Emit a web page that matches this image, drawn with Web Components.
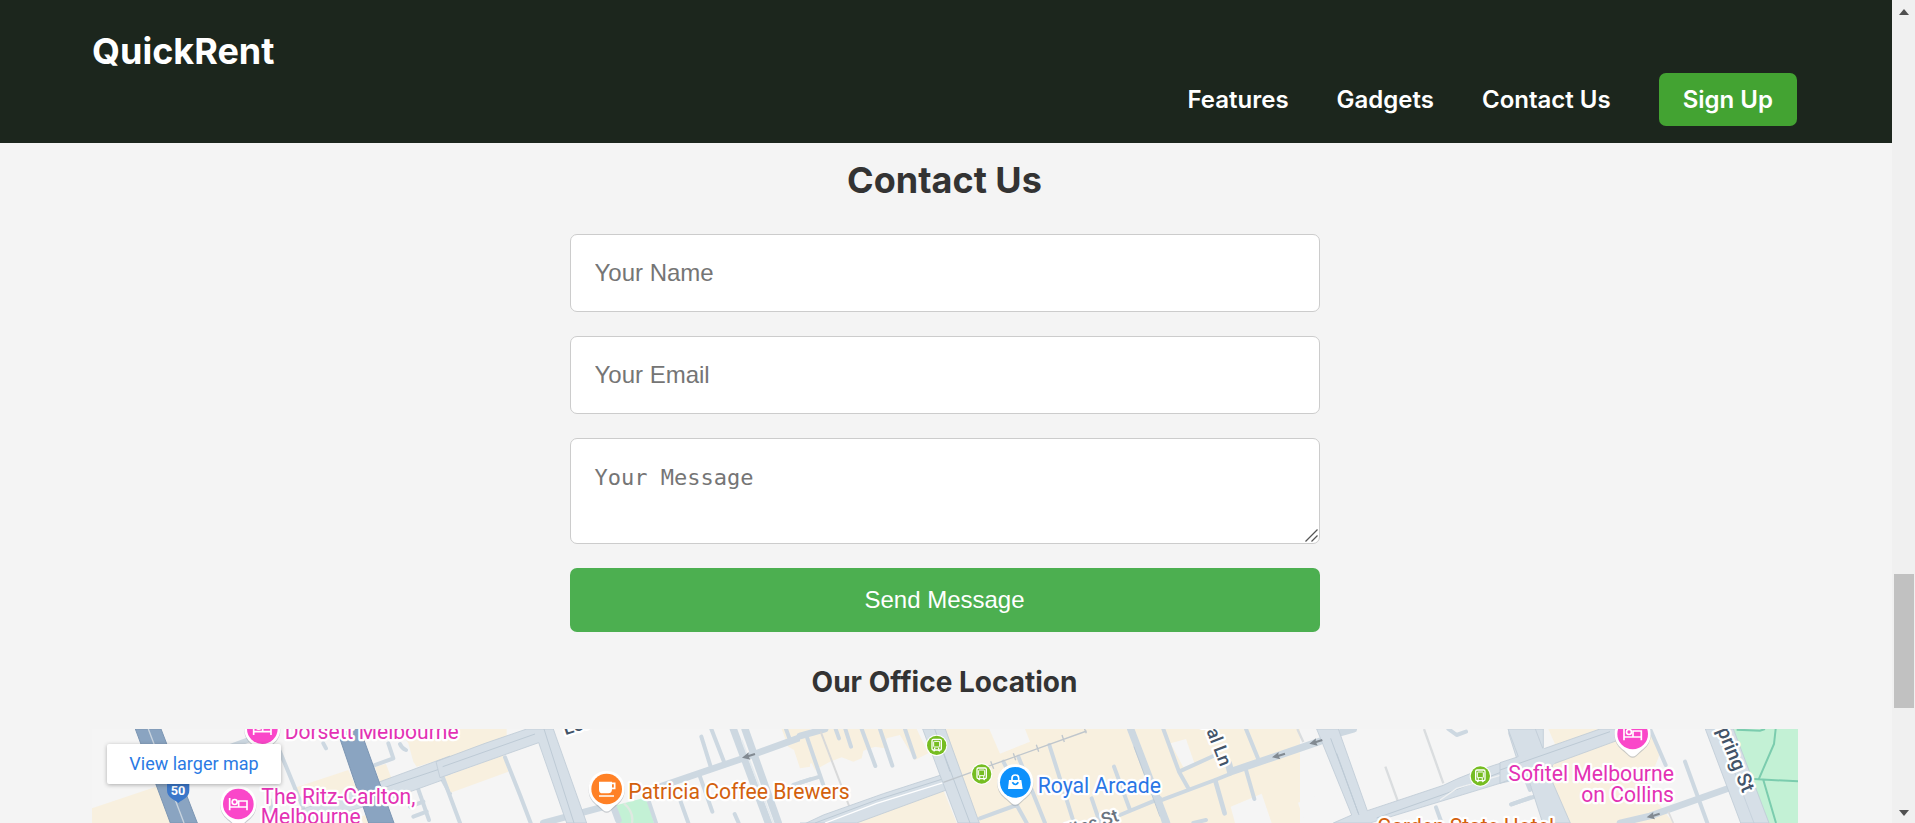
<!DOCTYPE html>
<html lang="en">
<head>
<meta charset="utf-8">
<title>QuickRent</title>
<style>
html,body{margin:0;height:100%;overflow:hidden}
body{background:#f4f4f4;font-family:Inter,sans-serif;color:#333}
</style>
</head>
<body>
<quick-rent-page></quick-rent-page>
<script>
const define = (name, html) => {
  const t = document.createElement('template');
  t.innerHTML = html;
  customElements.define(name, class extends HTMLElement {
    constructor() {
      super();
      this.attachShadow({mode: 'open'}).append(t.content.cloneNode(true));
    }
  });
};

define('nav-link', `
<style>
:host{display:block}
a{display:block;color:#fff;font-weight:600;font-size:24px;line-height:53px;text-decoration:none;white-space:nowrap}
:host([button]) a{background:#43a332;border-radius:7px;padding:0 24px}
</style><a href="#"><slot></slot></a>`);

define('site-header', `
<style>
:host{display:block;background:#1c261d;padding:28px 95px 17px 92px;height:143px;box-sizing:border-box}
.logo{font-weight:700;font-size:36px;line-height:46px;height:45px;color:#fff}
nav{display:flex;justify-content:flex-end;gap:48px}
</style>
<div class="logo">QuickRent</div>
<nav><nav-link>Features</nav-link><nav-link>Gadgets</nav-link><nav-link>Contact Us</nav-link><nav-link button>Sign Up</nav-link></nav>`);

define('contact-form', `
<style>
:host{display:block;width:750px;margin:0 auto}
form{display:flex;flex-direction:column;gap:24px}
input,textarea,button{box-sizing:border-box;width:100%;margin:0;border-radius:7px;font-size:24px}
input,textarea{border:1px solid #ccc;background:#fff;padding:24px 24px 24px 23.500px;outline:0}
input{height:78px;font-family:"Liberation Sans",Arial,sans-serif}
textarea{display:block;height:106px;padding-top:25px;font-family:"DejaVu Sans Mono",monospace;font-size:22px;line-height:28px;resize:none;overflow:hidden}
.message{position:relative}
.grip{position:absolute;right:2px;bottom:2px;width:13px;height:13px;fill:none;stroke:#555;stroke-width:1.300}
::placeholder{color:#757575}
button{height:64px;border:0;padding:0 7px 0 6px;background:#4caf50;color:#fff;font-family:"Liberation Sans",Arial,sans-serif}
</style>
<form><input placeholder="Your Name"><input placeholder="Your Email"><div class="message"><textarea placeholder="Your Message"></textarea><svg class="grip" viewBox="0 0 13 13"><path d="M.500 12.500L12.500.500M6.500 12.500L12.500 6.500"/></svg></div><button type="button">Send Message</button></form>`);

define('page-scrollbar', `
<style>
:host{display:flex;flex-direction:column;justify-content:space-between;width:23px;height:100%;background:#f0f0f0;align-items:center}
svg{display:block;width:23px;height:23px;fill:#505050}
.track{flex:1;width:20px;padding-top:551px;box-sizing:border-box}
.thumb{height:134px;background:#c1c1c1}
</style>
<svg viewBox="0 0 23 23"><path d="M7 15h10l-5-6z"/></svg>
<div class="track"><div class="thumb"></div></div>
<svg viewBox="0 0 23 23"><path d="M7 10h10l-5 6z"/></svg>`);

define('office-map', `
<style>
:host{display:block;position:relative;width:1706px;height:94px;overflow:hidden;background:#f5f5f5}
svg{display:block;width:1706px;height:94px}
.land{fill:#f8f0df}
.gap{fill:#f5f5f5}
.park{fill:#c3f1d5}
.r,.m{fill:none;stroke:#cdd8e1;stroke-linecap:round;stroke-linejoin:round}
.edge{fill:none;stroke:#bdcad5;stroke-width:3}
.big{fill:#d6dfe7;stroke:#bfcbd6;stroke-width:2.500}
.hw{fill:#8aa4c1;stroke:#7c96b3;stroke-width:3}
.path{fill:none;stroke:#7bccae;stroke-width:6}
.rail{fill:none;stroke:#bfc6cc;stroke-width:4}
text{font-family:Roboto,sans-serif;paint-order:stroke;stroke:#fff;stroke-width:14;stroke-linejoin:round}
.pink{fill:#e332b4}.orange{fill:#d3610d}.blue{fill:#2b76e5}.street{fill:#435469;font-weight:500}
.larger{position:absolute;left:15px;top:15px;width:174px;height:40px;background:#fff;border-radius:2px;box-shadow:0 1px 4px rgba(0,0,0,.3);font:18px/40px Roboto,sans-serif;color:#2a7ae4;text-align:center;text-decoration:none}
</style>
<svg viewBox="36 27 5118 282">
<defs>
<g id="pinbase"><path d="M0-54C-32-54-54-31-54 0C-54 24-41 38-26 49L-11 63Q0 72 11 63L26 49C41 38 54 24 54 0C54-31 32-54 0-54Z" fill="#9aa2aa" opacity=".5" transform="translate(0 4)"/><path d="M0-54C-32-54-54-31-54 0C-54 24-41 38-26 49L-11 63Q0 72 11 63L26 49C41 38 54 24 54 0C54-31 32-54 0-54Z" fill="#fff"/></g>
<g id="hotel"><use href="#pinbase"/><circle r="46" fill="#fa47c9"/><g fill="none" stroke="#fff" stroke-width="5"><path d="M-26-18V19M-26 9H26M26 19V-9H1V9"/><circle cx="-11" cy="-6" r="7.500"/></g></g>
<g id="tram"><circle r="32" fill="#fff"/><circle r="29" fill="#76bd22"/><rect x="-14" y="-18" width="28" height="32" rx="4" fill="none" stroke="#fff" stroke-width="4"/><rect x="-9" y="-12" width="18" height="17" rx="2" fill="none" stroke="#fff" stroke-width="3"/><path d="M-9 18l4-5M9 18l-4-5M-8 9h4M4 9h4" stroke="#fff" stroke-width="4"/></g>
<path id="arrow" d="M-19 5L1-11L0-3L19-9L21-3L2 3L6 11Z" fill="#828a92"/>
</defs>

<g>
<path class="land" d="M36 265L235 198L275 309H36ZM640 205L805 150L830 205L690 250ZM885 140L918 132L935 176L900 190ZM955 27H1280V60L1010 140L1000 125L985 70ZM840 290L910 270L935 309H850Z"/>
<path class="r" stroke-width="16" d="M450 80L545 45"/>
<path class="r" stroke-width="12" d="M600 95L672 270M730 70L738 85M925 70L940 115L880 137M960 72Q965 85 978 90M1085 175L1110 220M1012 200L1047 300M990 260L1030 245M1000 290L1040 275M570 240L580 309"/>
<path class="big" d="M660 270L900 185L1110 108V172L935 235L690 309H640Z"/>
<path class="edge" d="M900 207L1110 137"/>
<path class="hw" d="M166 27H243L352 309H271ZM770 27H840L942 309H866Z"/>
<path d="M205 27L312 309" stroke="#cad5df" stroke-width="4"/>
</g>

<g transform="translate(1080)">
<path class="land" d="M0 27H195L198 45L0 110ZM12 170L190 106L205 155L32 218ZM1025 27H1110V140L1080 145L1062 90L1045 80Z"/>
<path class="park" d="M520 258L620 232L642 309H535Z"/>
<path d="M552 250Q582 275 576 309" fill="none" stroke="#dfe8e1" stroke-width="7"/>
<path class="r" stroke-width="12" d="M10 175L60 309M195 112L240 225L272 309M784 50L812 140M814 27L852 125M780 170L817 275M722 245L745 309M884 282L896 309M625 240L648 309M1060 195L1110 178M1038 27L1050 60M1095 50L1110 90"/>
<path class="r" stroke-width="20" d="M310 309L500 258M660 200L900 118L1110 42M520 260L535 300"/>
<path class="r" stroke-width="22" d="M880 27L985 309M915 27L1015 309"/>
<path d="M905 60L1000 309" stroke="#e5ebef" stroke-width="5"/>
<path class="big" d="M-12 125L135 70L260 27H340L348 50L440 309H380L296 68L0 173Z"/>
<path class="edge" d="M8 140L285 42M312 27L402 309"/>
</g>

<g transform="translate(2160)">
<path class="land" d="M0 50L70 27H350L385 100L345 120L300 45L260 55L255 85L225 80L190 92L185 115L160 125L125 112L90 125L45 150L35 130L0 140ZM410 27H1500V309H540ZM160 309L430 210L470 309Z"/>
<path class="gap" d="M568 27H675L690 65L600 101Z"/>
<path class="r" stroke-width="20" d="M0 48L75 27"/>
<path class="r" stroke-width="12" d="M22 55L70 195M0 188L52 172M107 27L117 55M136 27L153 80M185 27L226 138M240 27L277 137M315 27L344 112M610 125L622 148M655 110L735 309M748 75L822 309M942 140L990 270M875 235L900 309M540 295L650 255L680 309M960 285L1080 235"/>
<path d="M62 35L150 265" fill="none" stroke="#d8d9da" stroke-width="6"/>
<path class="r" stroke-width="22" d="M992 27L1100 309"/>
<path d="M1002 80L1080 290" stroke="#bdcad5" stroke-width="3"/>
<path class="big" d="M0 318L70 285L250 221L420 166L445 208L170 309H0Z"/>
<path d="M75 309L230 250L430 188" fill="none" stroke="#fff" stroke-width="4"/>
<path class="edge" d="M45 309L230 240L425 178"/>
<path class="big" d="M368 27H436L538 309H474Z"/>
<path class="edge" d="M404 27L510 309M425 85L450 155"/>
<path class="rail" d="M430 187L570 137L860 33M572 124l9 22M640 100l7 21M709 74l7 21M786 45l7 21M853 25l6 15"/>
</g>

<g transform="translate(3240)">
<path class="gap" d="M32 70L78 57L104 132L70 142ZM212 260L305 221L335 309H225ZM414 248L535 205L580 309H435ZM577 55L650 27H895L845 50L790 75L808 115L782 127L790 160L705 195L712 238L622 275L565 125L604 110ZM945 45L1070 27V45L965 63Z"/>
<path class="r" stroke-width="12" d="M10 27L57 155L85 205M57 155L160 108M258 27L295 118M0 242L165 180L210 162M258 150L283 237M828 262L845 309M865 27L890 45L918 35M1055 253L1110 233M100 309L138 300M1100 185L1110 210M0 270L12 309"/>
<path class="r" stroke-width="14" d="M166 182L194 280"/>
<path class="r" stroke-width="22" d="M205 130L212 155L480 64M535 40L580 27"/>
<path d="M412 27L430 66M792 27L850 190M676 140L714 245" fill="none" stroke="#dadddf" stroke-width="7"/>
<path class="big" d="M470 27H535L622 272L850 196Q930 155 1070 115L1042 27H1150V160L1020 190L630 309H520L575 285Z"/>
<path class="edge" d="M650 294L860 220L1040 150M512 55L597 285M530 100L595 280"/>
<path d="M840 240L890 205L1040 160" fill="none" stroke="#eff1f2" stroke-width="4"/>
</g>

<g transform="translate(4260)">
<path class="gap" d="M155 27H620L710 309H520L440 205L480 100L455 27ZM0 27H25V40L0 48Z"/>
<path class="land" d="M145 27H455L480 100L440 205L520 309H205L158 185L130 90L165 72Z"/>
<path class="park" d="M700 27H894V309H800Z"/>
<path class="path" d="M710 29L780 32L795 27M827 27L822 72L776 178M762 177L894 184M790 180L828 309"/>
<path class="r" stroke-width="12" d="M450 27L497 135M555 125L622 309M33 253L100 231"/>
<path class="r" stroke-width="20" d="M360 309L450 288L685 205"/>
<path d="M505 275L520 309" stroke="#ddd" stroke-width="5"/>
<path class="big" d="M24 27H106L129 87L300 27H430L345 64L157 133V185L211 309H128L80 160L0 190V128L55 110Z"/>
<path d="M52 111L72 105L95 150L80 170ZM105 93L132 84L165 130L150 140L157 188L120 180Z" fill="#d6dfe7"/>
<path class="edge" d="M0 150L330 35"/>
<path class="big" d="M616 27H700L807 309H722Z"/>
<path class="edge" d="M655 27L762 309" opacity=".6"/>
</g>

<use href="#arrow" x="2005" y="108"/><use href="#arrow" x="3595" y="107"/><use href="#arrow" x="3707" y="66"/><use href="#arrow" x="4719" y="287"/>
<path d="M261 190H328V211C328 233 308 238 295 249C282 238 261 233 261 211Z" fill="#3b77c9"/>
<text x="294" y="226" font-size="38" text-anchor="middle" style="fill:#fff;stroke:none;font-weight:700">50</text>
<use href="#hotel" x="547" y="26"/><use href="#hotel" x="475" y="252"/><use href="#hotel" x="4658" y="42"/>
<g transform="translate(1580 207)"><use href="#pinbase"/><circle r="46" fill="#ff8126"/><path d="M-23-22H16V0Q16 13 5 13H-12Q-23 13-23 2Z" fill="#fff"/><path d="M16-17h8v15h-10M-23 21H22" fill="none" stroke="#fff" stroke-width="5"/></g>
<g transform="translate(2806 187)"><use href="#pinbase"/><circle r="46" fill="#0d91fc"/><path d="M-19-7H18L22 20H-22Z" fill="#fff"/><path d="M-10-6V-13Q-10-22 0-22Q10-22 10-13V-6" fill="none" stroke="#fff" stroke-width="5"/><path d="M-9 0Q0 13 9 0" fill="none" stroke="#0d91fc" stroke-width="5"/></g>
<use href="#tram" x="2570" y="76"/><use href="#tram" x="2705" y="162"/><use href="#tram" x="4201" y="168"/>
<g font-size="65">
<text class="pink" x="614" y="58" textLength="522" lengthAdjust="spacingAndGlyphs">Dorsett Melbourne</text>
<text class="pink" x="544" y="251" textLength="462" lengthAdjust="spacingAndGlyphs">The Ritz-Carlton,</text>
<text class="pink" x="542" y="313" textLength="300" lengthAdjust="spacingAndGlyphs">Melbourne</text>
<text class="orange" x="1645" y="238" textLength="664" lengthAdjust="spacingAndGlyphs">Patricia Coffee Brewers</text>
<text class="blue" x="2873" y="218" textLength="370" lengthAdjust="spacingAndGlyphs">Royal Arcade</text>
<text class="pink" x="4285" y="182" textLength="497" lengthAdjust="spacingAndGlyphs">Sofitel Melbourne</text>
<text class="pink" x="4504" y="245" textLength="278" lengthAdjust="spacingAndGlyphs">on Collins</text>
<text class="orange" x="3892" y="342" textLength="530" lengthAdjust="spacingAndGlyphs">Garden State Hotel</text>
</g>
<text class="street" font-size="56" transform="translate(1456 46) rotate(-18)">Lonsdale St</text>
<text class="street" font-size="55" text-anchor="end" transform="translate(3421 142) rotate(69)">Royal Ln</text>
<text class="street" font-size="59" text-anchor="end" transform="translate(4988 221) rotate(68)">Spring St</text>
<text class="street" font-size="54" text-anchor="end" style="fill:#6a7480" transform="translate(3119 302) rotate(-18)">Collins St</text>
</svg>
<a class="larger" href="#">View larger map</a>`);

define('quick-rent-page', `
<style>
:host{display:grid;grid-template-columns:1fr 23px;height:823px;overflow:hidden}
.content{height:823px;overflow:hidden}
main{padding:0 94px 0 92px}
h2,h3{margin:0 1px 0 0;text-align:center;color:#333;font-weight:700}
h2{font-size:36px;line-height:44px;padding:15px 0 32px}
h3{font-size:28px;line-height:34px;padding:33px 0 30px}
</style>
<div class="content"><site-header></site-header>
<main><h2>Contact Us</h2><contact-form></contact-form><h3>Our Office Location</h3><office-map></office-map></main></div>
<page-scrollbar></page-scrollbar>`);
</script>
</body>
</html>
